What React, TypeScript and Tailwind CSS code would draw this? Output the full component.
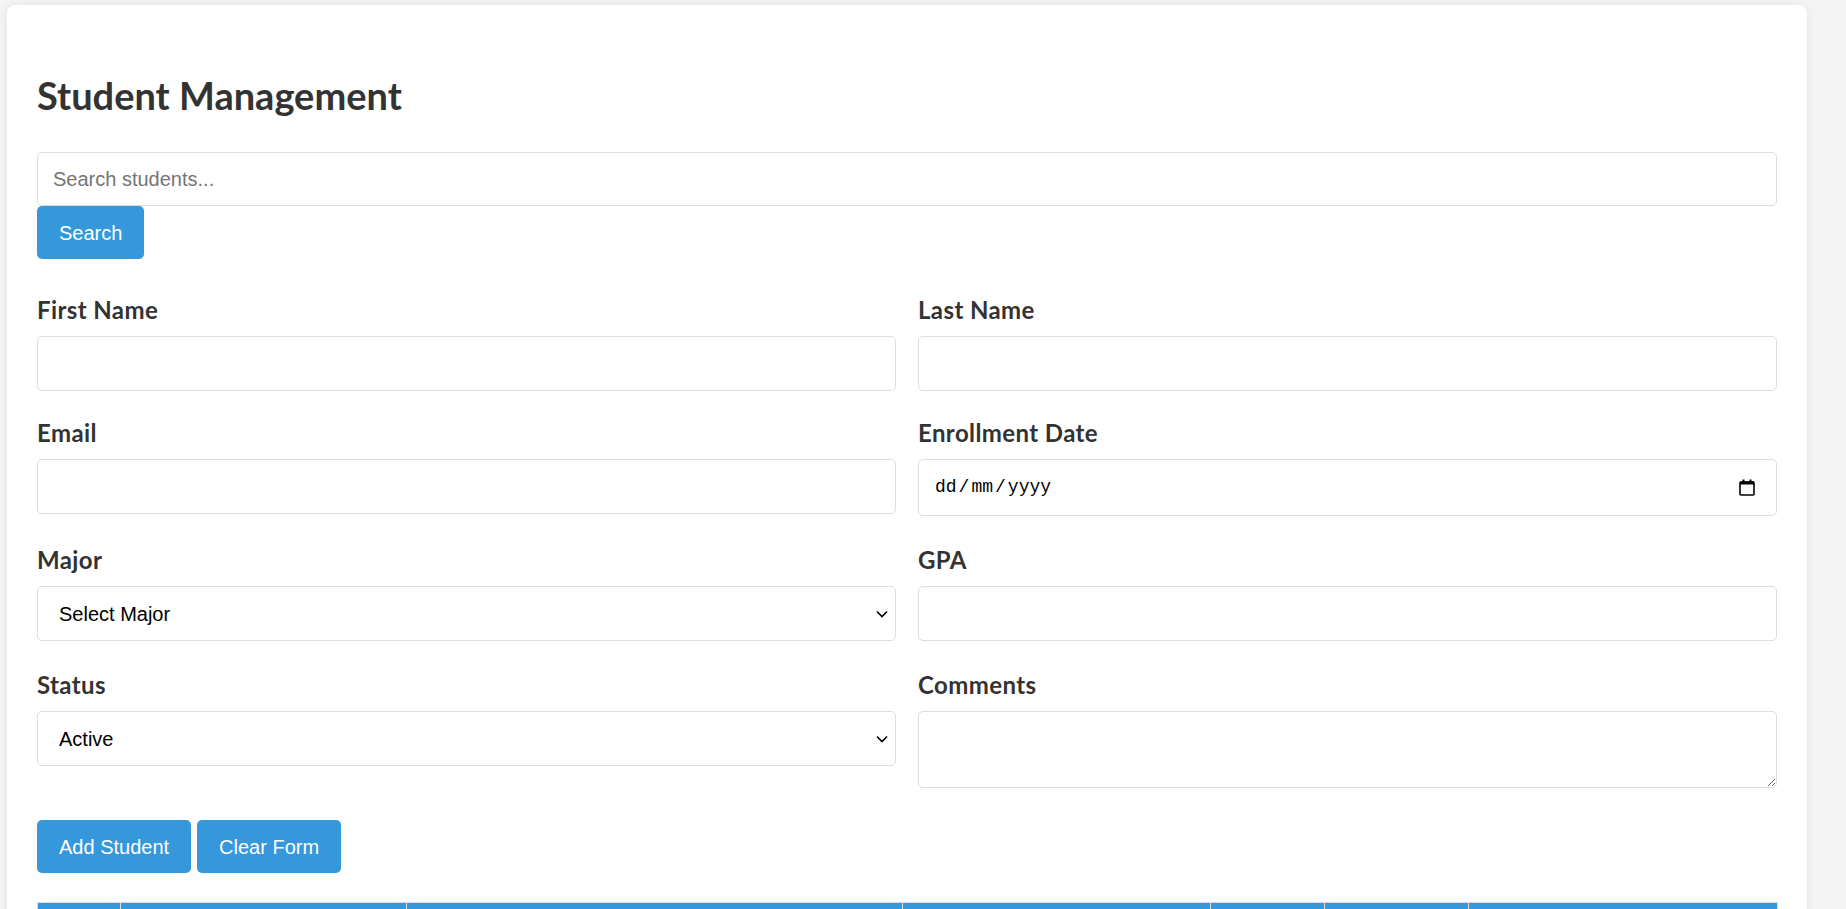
import React, { useState } from 'react';

const labelCls = 'block text-[24px] tracking-[0.4px] leading-[28px] font-bold text-[#333] mb-[12px] font-["Lato",sans-serif]';
const fieldBase =
  'block w-full px-[15px] border border-[#ddd] rounded-[5px] bg-white text-[20px] text-black font-["Liberation_Sans",Arial,sans-serif] placeholder:text-[#757575] outline-none';
const inputCls = fieldBase + ' h-[55px]';
const btnCls =
  'h-[53px] px-[22px] rounded-[5px] bg-[#3498db] text-white text-[20px] font-["Liberation_Sans",Arial,sans-serif]';

const Chevron = () => (
  <svg
    className="pointer-events-none absolute right-[8px] top-1/2 -translate-y-1/2"
    width="12"
    height="8"
    viewBox="0 0 12 8"
    fill="none"
  >
    <path d="M1 1.5l5 5 5-5" stroke="#000" strokeWidth="1.6" />
  </svg>
);

const CalendarIcon = () => (
  <svg width="16" height="17" viewBox="0 0 16 17" fill="none">
    <rect x="1" y="3" width="14" height="13" rx="1" stroke="#000" strokeWidth="1.6" />
    <rect x="1" y="2.5" width="14" height="3" fill="#000" />
    <rect x="3.5" y="0.5" width="2" height="3" fill="#000" />
    <rect x="10.5" y="0.5" width="2" height="3" fill="#000" />
  </svg>
);

const columns = [
  { name: 'ID', w: 'w-[83px]' },
  { name: 'Name', w: 'w-[286px]' },
  { name: 'Email', w: 'w-[496px]' },
  { name: 'Major', w: 'w-[308px]' },
  { name: 'GPA', w: 'w-[114px]' },
  { name: 'Status', w: 'w-[144px]' },
  { name: 'Actions', w: 'w-[309px]' },
];

export default function App() {
  const [search, setSearch] = useState('');
  const [form, setForm] = useState({
    firstName: '',
    lastName: '',
    email: '',
    major: '',
    gpa: '',
    status: 'Active',
    comments: '',
  });

  const update = (key: string) => (e: any) => setForm({ ...form, [key]: e.target.value });

  const clearForm = () =>
    setForm({ firstName: '', lastName: '', email: '', major: '', gpa: '', status: 'Active', comments: '' });

  return (
    <div className="min-h-screen bg-[#f4f4f4] pt-[5px] pl-[7px] pb-[40px]">
      <div className="w-[1800px] bg-white rounded-[8px] shadow-[0_0_10px_rgba(0,0,0,0.08)] px-[30px] pt-[30px] pb-[30px]">
        <h1 className='mt-[37px] mb-[34px] text-[38px] leading-[46px] font-bold text-[#333] font-["Lato",sans-serif]'>
          Student Management
        </h1>

        {/* Search */}
        <div>
          <input
            className={fieldBase + ' h-[54px]'}
            placeholder="Search students..."
            value={search}
            onChange={(e) => setSearch(e.target.value)}
          />
          <button className={btnCls}>Search</button>
        </div>

        {/* Form */}
        <div className="grid grid-cols-2 gap-x-[22px] mt-[37px]">
          <div className="mb-[28px]">
            <label className={labelCls}>First Name</label>
            <input className={inputCls} value={form.firstName} onChange={update('firstName')} />
          </div>
          <div className="mb-[28px]">
            <label className={labelCls}>Last Name</label>
            <input className={inputCls} value={form.lastName} onChange={update('lastName')} />
          </div>

          <div className="mb-[30px]">
            <label className={labelCls}>Email</label>
            <input className={inputCls} value={form.email} onChange={update('email')} />
          </div>
          <div className="mb-[30px]">
            <label className={labelCls}>Enrollment Date</label>
            <div className="flex items-center justify-between w-full h-[57px] pl-[16px] pr-[21px] border border-[#ddd] rounded-[5px] bg-white">
              <span className='text-[18px] text-black font-["Liberation_Mono",monospace]'>
                dd<span className="mx-[2px]">/</span>mm<span className="mx-[2px]">/</span>yyyy
              </span>
              <CalendarIcon />
            </div>
          </div>

          <div className="mb-[30px]">
            <label className={labelCls}>Major</label>
            <div className="relative">
              <select
                className={inputCls + ' appearance-none pl-[21px]'}
                value={form.major}
                onChange={update('major')}
              >
                <option value="">Select Major</option>
                <option>Computer Science</option>
                <option>Mathematics</option>
                <option>Physics</option>
                <option>Biology</option>
              </select>
              <Chevron />
            </div>
          </div>
          <div className="mb-[30px]">
            <label className={labelCls}>GPA</label>
            <input className={inputCls} value={form.gpa} onChange={update('gpa')} />
          </div>

          <div className="mb-[28px]">
            <label className={labelCls}>Status</label>
            <div className="relative">
              <select
                className={inputCls + ' appearance-none pl-[21px]'}
                value={form.status}
                onChange={update('status')}
              >
                <option>Active</option>
                <option>Inactive</option>
                <option>Graduated</option>
              </select>
              <Chevron />
            </div>
          </div>
          <div className="mb-[28px]">
            <label className={labelCls}>Comments</label>
            <textarea
              className={fieldBase + ' h-[77px] py-[10px] resize-y'}
              value={form.comments}
              onChange={update('comments')}
            />
          </div>
        </div>

        <div className="flex gap-[6px] mt-[4px]">
          <button className={btnCls}>Add Student</button>
          <button className={btnCls} onClick={clearForm}>
            Clear Form
          </button>
        </div>

        {/* Students table */}
        <table className="mt-[29px] w-full table-fixed border-collapse border border-[#ddd]">
          <thead>
            <tr>
              {columns.map((c) => (
                <th
                  key={c.name}
                  className={`${c.w} bg-[#3498db] text-white text-left px-[15px] py-[15px] border border-[#ddd] text-[20px] font-["Lato",sans-serif]`}
                >
                  {c.name}
                </th>
              ))}
            </tr>
          </thead>
          <tbody>
            <tr>
              <td colSpan={7} className='px-[15px] py-[15px] border border-[#ddd] text-[20px] text-[#333] font-["Lato",sans-serif]'>
                No students found
              </td>
            </tr>
          </tbody>
        </table>
      </div>
    </div>
  );
}
